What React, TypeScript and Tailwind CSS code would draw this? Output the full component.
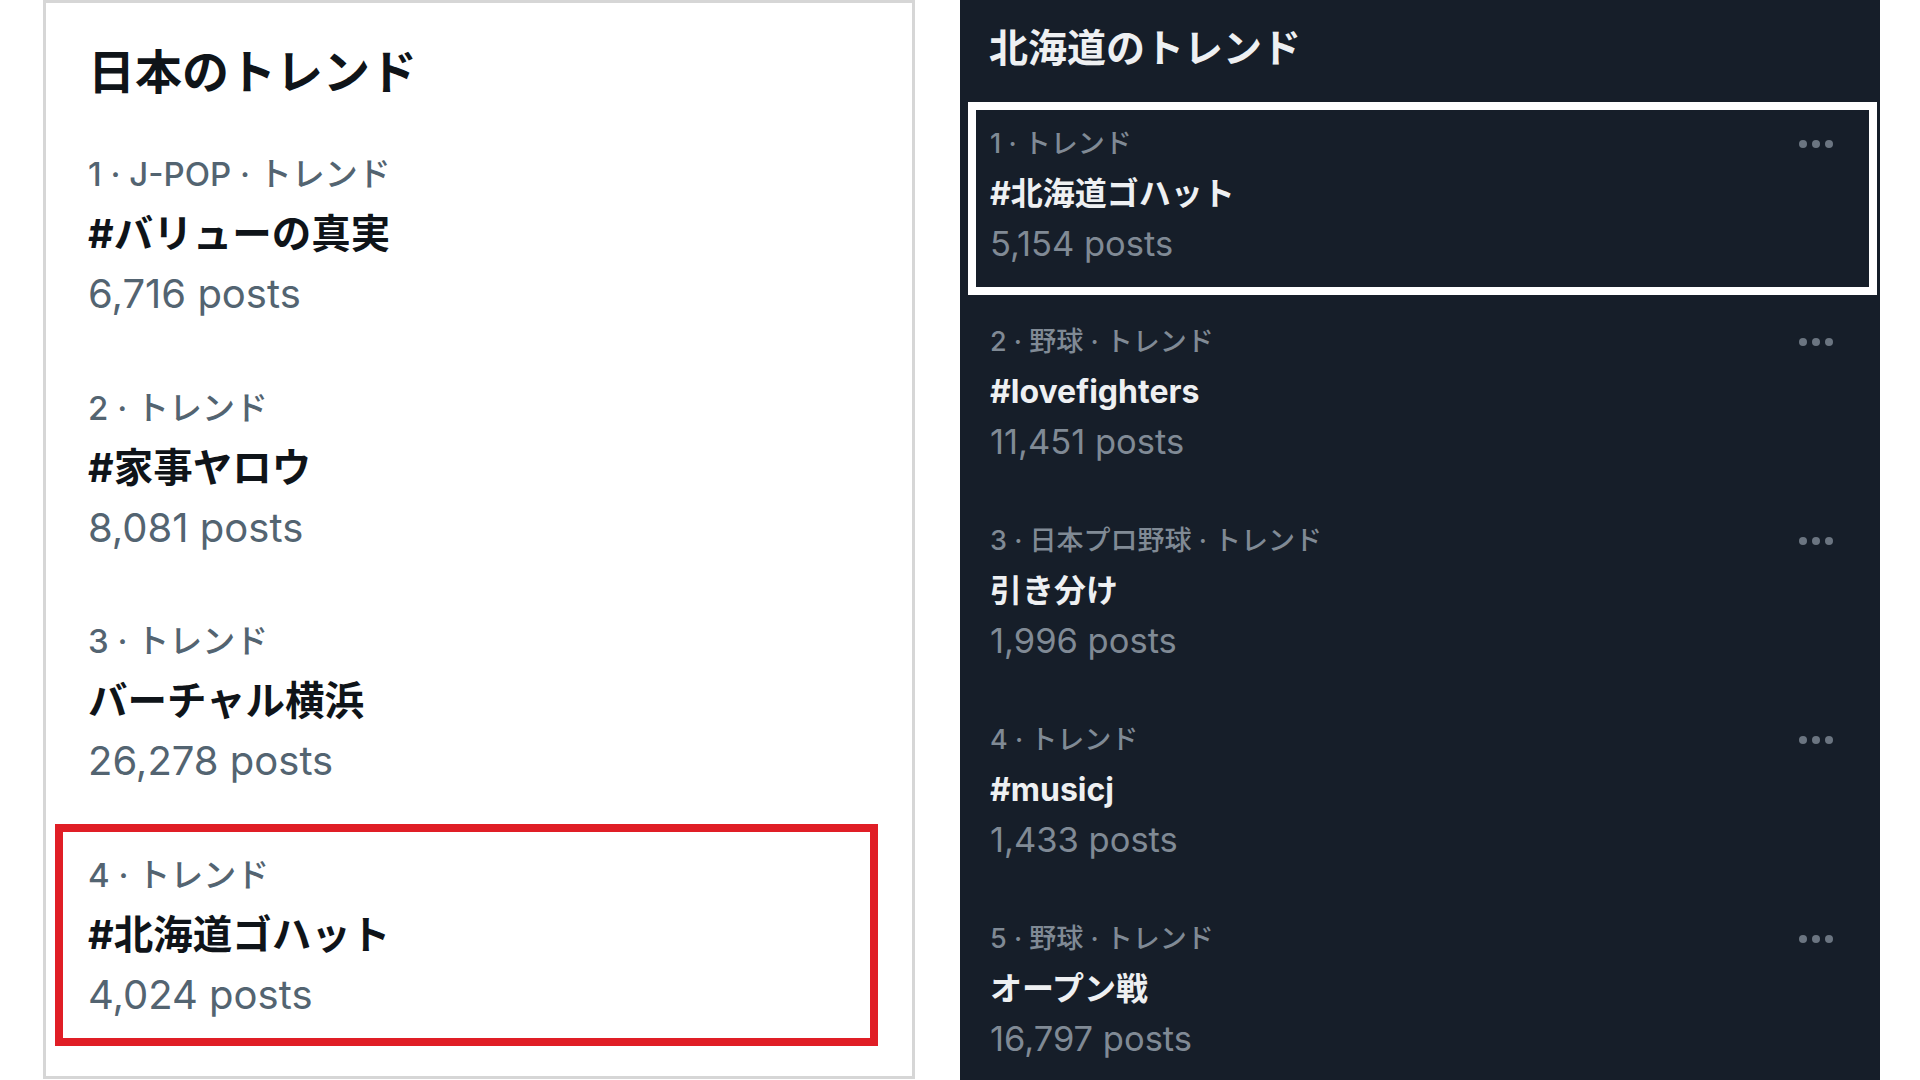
import React from "react";

type Trend = {
  meta: string;
  title: string;
  posts: string;
};

const japanTrends: Trend[] = [
  { meta: "1 · J-POP · トレンド", title: "#バリューの真実", posts: "6,716 posts" },
  { meta: "2 · トレンド", title: "#家事ヤロウ", posts: "8,081 posts" },
  { meta: "3 · トレンド", title: "バーチャル横浜", posts: "26,278 posts" },
];

const hokkaidoTrends: Trend[] = [
  { meta: "2 · 野球 · トレンド", title: "#lovefighters", posts: "11,451 posts" },
  { meta: "3 · 日本プロ野球 · トレンド", title: "引き分け", posts: "1,996 posts" },
  { meta: "4 · トレンド", title: "#musicj", posts: "1,433 posts" },
  { meta: "5 · 野球 · トレンド", title: "オープン戦", posts: "16,797 posts" },
];

function LightItem({ item }: { item: Trend }) {
  return (
    <div className="flex flex-col">
      <div className="h-[60px] leading-[60px] text-[33px] font-medium text-[#536471]">{item.meta}</div>
      <div className="h-[60px] leading-[60px] text-[39.5px] font-bold text-[#0f1419]">{item.title}</div>
      <div className="h-[60px] leading-[60px] text-[40px] text-[#536471]">{item.posts}</div>
    </div>
  );
}

function Dots() {
  return (
    <div className="flex items-center gap-[5px]">
      <span className="w-[8px] h-[8px] rounded-full bg-[#6b7581]" />
      <span className="w-[8px] h-[8px] rounded-full bg-[#6b7581]" />
      <span className="w-[8px] h-[8px] rounded-full bg-[#6b7581]" />
    </div>
  );
}

function DarkItem({ item }: { item: Trend }) {
  return (
    <div className="flex flex-col">
      <div className="h-[50px] flex items-center justify-between">
        <span className="leading-[50px] text-[27px] font-medium text-[#808a95]">{item.meta}</span>
        <Dots />
      </div>
      <div className="h-[50px] leading-[50px] text-[32px] font-bold text-[#eef0f2]">{item.title}</div>
      <div className="h-[50px] leading-[50px] text-[34.5px] text-[#808a95]">{item.posts}</div>
    </div>
  );
}

export default function App() {
  return (
    <div className="w-[1920px] h-[1080px] bg-white flex items-start overflow-hidden font-['Inter','Noto_Sans_CJK_JP',sans-serif]">
      {/* 日本のトレンド (light) */}
      <div className="ml-[43px] w-[872px] h-[1079px] border-[3px] border-[#d6d6d6] bg-white pt-[39px] flex flex-col">
        <h2 className="pl-[42px] h-[60px] leading-[60px] text-[47px] font-bold text-[#0f1419]">日本のトレンド</h2>
        <div className="pl-[42px] mt-[42px] flex flex-col gap-[53.5px]">
          {japanTrends.map((t, i) => (
            <LightItem key={i} item={t} />
          ))}
        </div>
        <div className="mt-[33px] ml-[9px] mr-[34px] border-[8px] border-[#e01e26] pl-[25px] pt-[12.5px] pb-[13.5px]">
          <LightItem item={{ meta: "4 · トレンド", title: "#北海道ゴハット", posts: "4,024 posts" }} />
        </div>
      </div>

      {/* 北海道のトレンド (dark) */}
      <div className="ml-[45px] w-[920px] h-[1080px] bg-[#161e29] pt-[23px] flex flex-col">
        <h2 className="pl-[29px] h-[50px] leading-[50px] text-[39px] font-bold text-[#eef0f2]">北海道のトレンド</h2>
        <div className="mt-[29px] ml-[8px] mr-[3px] border-[8px] border-white pl-[14px] pr-[36px] pt-[9px] pb-[18px]">
          <DarkItem item={{ meta: "1 · トレンド", title: "#北海道ゴハット", posts: "5,154 posts" }} />
        </div>
        <div className="mt-[22px] pl-[30px] pr-[47px] flex flex-col gap-[49px]">
          {hokkaidoTrends.map((t, i) => (
            <DarkItem key={i} item={t} />
          ))}
        </div>
      </div>
    </div>
  );
}
